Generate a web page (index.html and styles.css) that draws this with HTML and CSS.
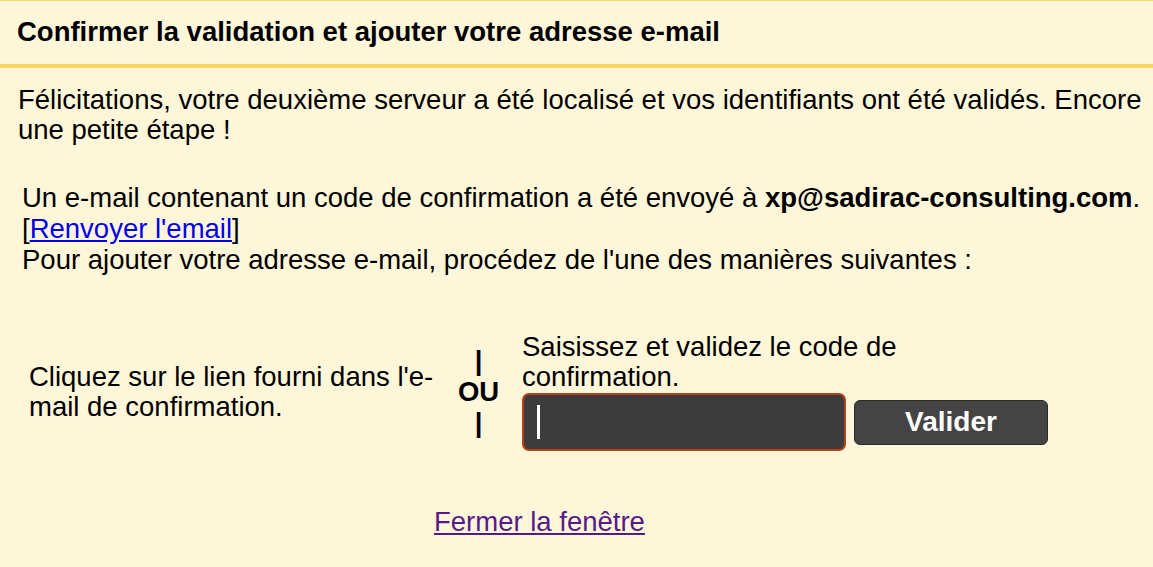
FILE: index.html
```html
<!DOCTYPE html>
<html lang="fr">
<head>
<meta charset="utf-8">
<title>Confirmer la validation</title>
<link rel="stylesheet" href="styles.css">
</head>
<body>
<div class="dialog">
  <div class="header">Confirmer la validation et ajouter votre adresse e-mail</div>
  <p class="intro">Félicitations, votre deuxième serveur a été localisé et vos identifiants ont été validés. Encore une petite étape !</p>
  <div class="info">
    Un e-mail contenant un code de confirmation a été envoyé à <b>xp@sadirac-consulting.com</b>.<br>
    [<a href="#" class="link">Renvoyer l'email</a>]<br>
    Pour ajouter votre adresse e-mail, procédez de l'une des manières suivantes :
  </div>
  <div class="choices">
    <div class="choice-left">Cliquez sur le lien fourni dans l'e-mail de confirmation.</div>
    <div class="or"><span>|</span><span>OU</span><span>|</span></div>
    <div class="choice-right">
      <div class="label">Saisissez et validez le code de confirmation.</div>
      <div class="form-row">
        <div class="code-input"><span class="caret"></span></div>
        <button class="btn">Valider</button>
      </div>
    </div>
  </div>
  <div class="footer"><a href="#" class="close">Fermer la fenêtre</a></div>
</div>
</body>
</html>
```

FILE: styles.css
```css
html, body {
  margin: 0;
  padding: 0;
  background: #fef6d9;
}
body {
  font-family: "Liberation Sans", Arial, sans-serif;
  font-size: 27.5px;
  color: #000;
}
.dialog {
  width: 1153px;
  height: 567px;
  background: #fef6d9;
  overflow: hidden;
}
.header {
  border-top: 1px solid #fcd462;
  border-bottom: 4px solid #fcd462;
  padding: 17px 18px 18px 17px;
  line-height: 28px;
  font-weight: bold;
}
.intro {
  margin: 17px 0 0;
  padding: 0 4px 0 18px;
  line-height: 30px;
}
.info {
  margin-top: 37px;
  padding: 0 0 0 22px;
  line-height: 31px;
}
.link {
  color: #0000ee;
}
.choices {
  display: flex;
  align-items: center;
  margin-top: 57px;
  padding-left: 29px;
}
.choice-left {
  width: 406px;
  line-height: 30px;
}
.or {
  width: 87px;
  display: flex;
  flex-direction: column;
  align-items: center;
  font-weight: bold;
  line-height: 31px;
}
.choice-right {
  width: 540px;
}
.label {
  width: 470px;
  line-height: 30px;
}
.form-row {
  display: flex;
  align-items: center;
  gap: 8px;
  margin-top: 1px;
}
.code-input {
  box-sizing: border-box;
  width: 324px;
  height: 58px;
  background: #3c3c3c;
  border: 2px solid #b5401a;
  border-radius: 7px;
  display: flex;
  align-items: center;
  padding-left: 13px;
}
.caret {
  width: 3px;
  height: 34px;
  background: #fff;
}
.btn {
  box-sizing: border-box;
  width: 194px;
  height: 45px;
  background: #444444;
  border: 1px solid #2a2a2a;
  border-radius: 6px;
  color: #fff;
  font-family: "Liberation Sans", Arial, sans-serif;
  font-size: 28px;
  font-weight: bold;
  padding: 0;
}
.footer {
  margin-top: 56px;
  padding-left: 434px;
  line-height: 30px;
}
.close {
  color: #551a8b;
}
```
